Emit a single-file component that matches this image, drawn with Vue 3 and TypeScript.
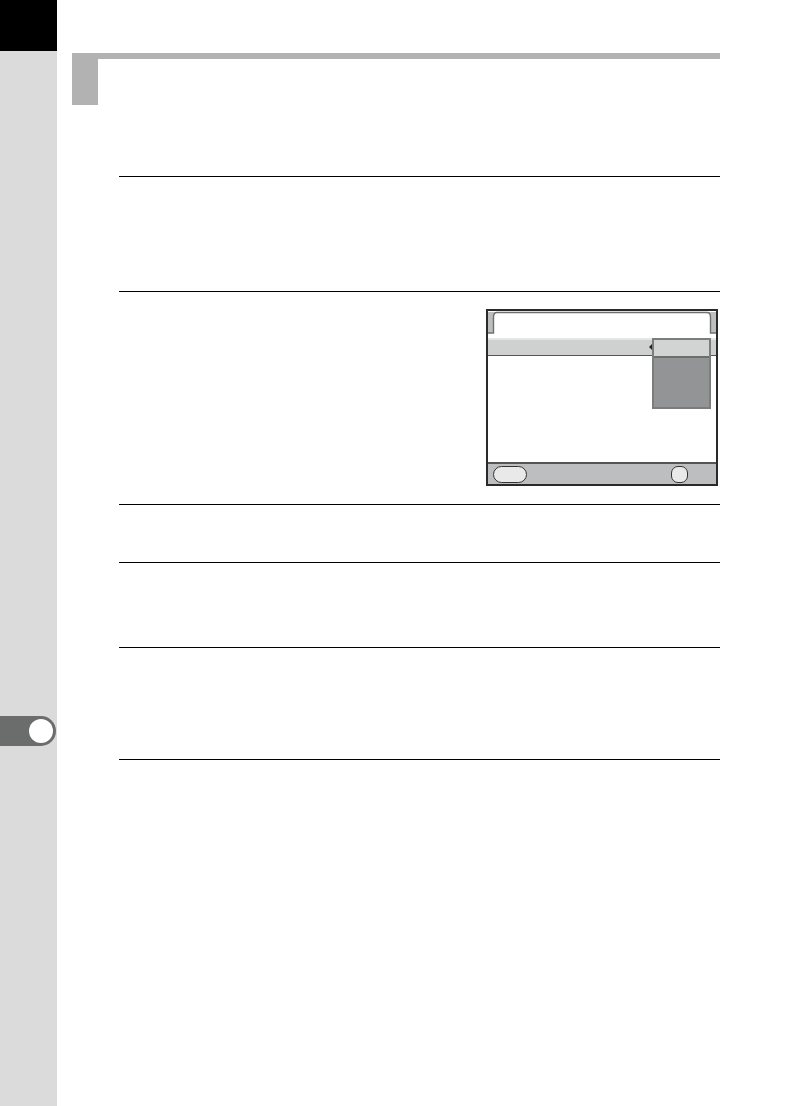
<script setup lang="ts">
const ruleHeights: number[] = [58, 85, 112]
</script>

<template>
  <div class="page">
    <aside class="side">
      <div class="corner"></div>
      <div class="tab"><span class="dot"></span></div>
    </aside>
    <main class="main">
      <header class="head"><div class="head-block"></div></header>
      <div class="steps">
        <section class="step step-a"></section>
        <section class="step step-b">
          <div class="screen">
            <svg class="title" width="228" height="27" viewBox="0 0 228 27">
              <path d="M0 1H9Q5.5 1.5 5.5 6V22H0Z" fill="#bdbebe" />
              <path d="M228 1H219Q222.5 1.5 222.5 6V22H228Z" fill="#bdbebe" />
              <path
                d="M0 22H5.5V6Q5.5 1.5 9 1.5H219Q222.5 1.5 222.5 6V22H228"
                fill="none"
                stroke="#6f7070"
                stroke-width="1.4"
              />
            </svg>
            <div class="row">
              <span class="arrow"></span>
              <div class="menu"><div class="menu-sel"></div></div>
            </div>
            <div class="body"></div>
            <div class="foot">
              <span class="btn btn-wide"></span>
              <span class="btn btn-round"></span>
            </div>
          </div>
        </section>
        <section
          v-for="(h, i) in ruleHeights"
          :key="i"
          class="step"
          :style="{ height: h + 'px' }"
        ></section>
        <div class="step step-end"></div>
      </div>
    </main>
  </div>
</template>

<style>
html, body { margin: 0; background: #fff; }
</style>

<style scoped>
.page { display: flex; width: 794px; height: 1106px; background: #fff; overflow: hidden; }
.side { width: 57px; flex: none; background: #dbdbdb; display: flex; flex-direction: column; }
.corner { height: 51px; background: #000; }
.tab {
  margin-top: 665px; height: 30px; width: 56px; box-sizing: border-box;
  background: #6b6d6d; border-radius: 0 15px 15px 0;
  display: flex; align-items: center; justify-content: flex-end; padding-right: 3px;
}
.dot { width: 24px; height: 24px; border-radius: 50%; background: #fff; }
.main { flex: 1; padding: 53px 74px 0 15px; display: flex; flex-direction: column; }
.head { height: 52px; border-top: 6px solid #b2b2b2; box-sizing: border-box; }
.head-block { width: 26px; height: 46px; background: #b2b2b2; }
.steps { margin-top: 71px; margin-left: 47px; }
.step { border-top: 1px solid #000; box-sizing: border-box; }
.step-a { height: 115px; }
.step-b { height: 213px; display: flex; justify-content: flex-end; padding: 17px 2px 0 0; }
.step-end { height: 0; }
.screen {
  width: 232px; height: 177px; box-sizing: border-box; border: 2px solid #2a2a2a;
  display: flex; flex-direction: column; background: #fff;
}
.title { display: block; flex: none; }
.row {
  height: 18px; flex: none; box-sizing: border-box;
  background: linear-gradient(#e6e6e6 0 2px, #cfd0d0 2px);
  border-bottom: 1px solid #555;
  display: flex; align-items: center; padding-right: 64px; justify-content: flex-end;
  position: relative;
}
.arrow {
  width: 0; height: 0; border: 4px solid transparent; border-left: 0; border-right: 4px solid #222;
  margin-right: -1px;
}
.menu {
  position: absolute; right: 5px; top: 0; width: 59px; height: 71px; box-sizing: border-box;
  background: #939495; border: 2px solid #7b7c7c;
}
.menu-sel { height: 16px; background: #d2d3d3; border-bottom: 2px solid #6d6e6e; }
.body { flex: 1; }
.foot {
  height: 22px; flex: none; background: #bdbebf; border-top: 2px solid #555; box-sizing: border-box;
  display: flex; align-items: center; justify-content: space-between; padding: 0 28px 0 5px;
}
.btn { height: 17px; background: #e9e9e9; border: 1.5px solid #333; box-sizing: border-box; border-radius: 8.5px; }
.btn-wide { width: 34px; }
.btn-round { width: 17px; border-radius: 7px; }
</style>
